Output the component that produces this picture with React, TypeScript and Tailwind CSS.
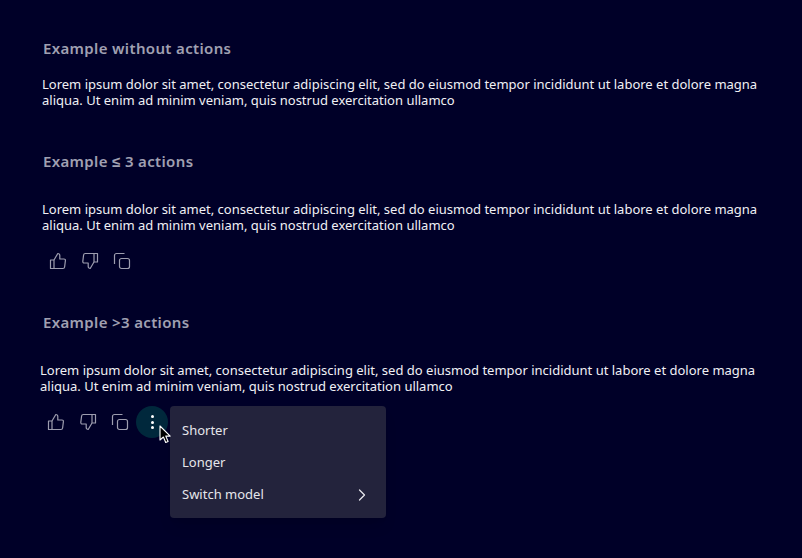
import { ChevronRight } from 'lucide-react';

const lorem =
  'Lorem ipsum dolor sit amet, consectetur adipiscing elit, sed do eiusmod tempor incididunt ut labore et dolore magna aliqua. Ut enim ad minim veniam, quis nostrud exercitation ullamco';

function ThumbUp() {
  return (
    <svg width="18" height="18" viewBox="0 0 18 18" fill="none" stroke="#9d9daf" strokeWidth="1.2" strokeLinejoin="round">
      <path d="M1.5 8h3.5v8.5H1.5z" />
      <path d="M5 8l3.8-6.5c1.2 0 2 .8 2 2V7h4.2c.9 0 1.5.7 1.4 1.6l-.8 6.4c-.1.9-.8 1.5-1.7 1.5H5" />
    </svg>
  );
}

function ThumbDown() {
  return (
    <svg width="18" height="18" viewBox="0 0 18 18" fill="none" stroke="#9d9daf" strokeWidth="1.2" strokeLinejoin="round">
      <path d="M13 10h3.5V1.5H13z" />
      <path d="M13 10l-3.8 6.5c-1.2 0-2-.8-2-2V11H3.2c-.9 0-1.5-.7-1.4-1.6l.8-6.4c.1-.9.8-1.5 1.7-1.5H13" />
    </svg>
  );
}

function Copy() {
  return (
    <svg width="18" height="18" viewBox="0 0 18 18" fill="none" stroke="#9d9daf" strokeWidth="1.2" strokeLinejoin="round">
      <rect x="6.5" y="6.5" width="10" height="10" rx="2" />
      <path d="M1.5 12V3.5c0-1.1.9-2 2-2h8" />
    </svg>
  );
}

function Actions() {
  return (
    <>
      <span className="w-8 h-8 flex items-center justify-center"><ThumbUp /></span>
      <span className="w-8 h-8 flex items-center justify-center"><ThumbDown /></span>
      <span className="w-8 h-8 flex items-center justify-center"><Copy /></span>
    </>
  );
}

function Heading({ children }: { children: string }) {
  return <h2 className="ml-[43px] text-[15px] tracking-[0.35px] leading-5 font-semibold text-[#a0a0b2]">{children}</h2>;
}

function Body({ className }: { className: string }) {
  return <p className={`text-[13px] leading-4 text-[#f0f0f5] w-[730px] ${className}`}>{lorem}</p>;
}

export default function App() {
  return (
    <div
      className="w-[802px] h-[558px] overflow-hidden bg-[#000028] pt-[38px]"
      style={{ fontFamily: '"Noto Sans", sans-serif' }}
    >
      <Heading>Example without actions</Heading>
      <Body className="ml-[42px] mt-[18px]" />

      <div className="mt-[43px]">
        <Heading>Example ≤ 3 actions</Heading>
      </div>
      <Body className="ml-[42px] mt-[30px]" />
      <div className="flex ml-[42px] mt-[12px]">
        <Actions />
      </div>

      <div className="mt-[35px]">
        <Heading>{'Example >3 actions'}</Heading>
      </div>
      <Body className="ml-[40px] mt-[30px]" />
      <div className="relative flex ml-[40px] mt-[12px]">
        <Actions />
        <span className="w-8 h-8 rounded-full bg-[#00283c] flex flex-col items-center justify-center gap-[2.5px]">
          <i className="w-[3px] h-[3px] rounded-full bg-white" />
          <i className="w-[3px] h-[3px] rounded-full bg-white" />
          <i className="w-[3px] h-[3px] rounded-full bg-white" />
        </span>

        <div className="absolute left-[130px] top-0 w-[216px] h-[112px] rounded-[4px] bg-[#23233c] pt-[9px] text-[13px] text-[#e6e6eb] shadow-lg">
          <div className="h-8 px-3 flex items-center">Shorter</div>
          <div className="h-8 px-3 flex items-center">Longer</div>
          <div className="h-8 px-3 flex items-center justify-between">
            Switch model
            <ChevronRight size={20} strokeWidth={1.5} className="mr-[2px]" color="#e6e6eb" />
          </div>
        </div>

        <svg className="absolute left-[119px] top-[19px]" width="13" height="19" viewBox="0 0 13 19">
          <path d="M1 1v14l3.4-3 2.3 5.5 2.4-1-2.3-5.4h4.4z" fill="#000" stroke="#fff" strokeWidth="1.1" strokeLinejoin="round" />
        </svg>
      </div>
    </div>
  );
}
